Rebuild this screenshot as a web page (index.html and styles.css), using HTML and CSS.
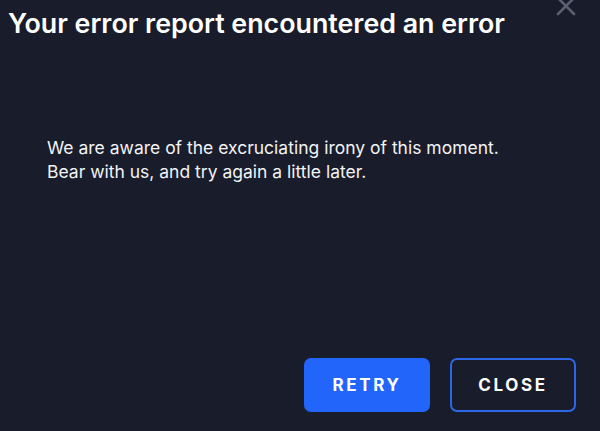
FILE: index.html
```html
<!DOCTYPE html>
<html lang="en">
<head>
    <meta charset="UTF-8">
    <title>Error report</title>
    <link rel="stylesheet" href="styles.css">
</head>
<body>
    <div class="dialog">
        <header class="dialog-header">
            <h1>Your error report encountered an error</h1>
            <button class="close-x" aria-label="Close">
                <svg width="20" height="20" viewBox="0 0 20 20">
                    <path d="M2 2 L18 18 M18 2 L2 18" stroke="#5b5f70" stroke-width="2.6" stroke-linecap="round"/>
                </svg>
            </button>
        </header>
        <div class="dialog-body">
            <p>We are aware of the excruciating irony of this moment.<br>
            Bear with us, and try again a little later.</p>
        </div>
        <footer class="dialog-actions">
            <button class="btn btn-primary">RETRY</button>
            <button class="btn btn-outline">CLOSE</button>
        </footer>
    </div>
</body>
</html>
```

FILE: styles.css
```css
* {
    margin: 0;
    padding: 0;
    box-sizing: border-box;
}

html, body {
    height: 100%;
}

body {
    background-color: #191c2a;
    color: #fff;
    font-family: Inter, "Open Sans", sans-serif;
    overflow: hidden;
}

.dialog {
    height: 100%;
    display: flex;
    flex-direction: column;
    padding: 0 24px 19px 8px;
}

.dialog-header {
    display: flex;
    justify-content: space-between;
    align-items: flex-start;
}

.dialog-header h1 {
    font-size: 26.8px;
    font-weight: 600;
    line-height: 32px;
    margin-top: 7px;
    letter-spacing: 0;
    white-space: nowrap;
}

.close-x {
    background: none;
    border: none;
    margin-top: -4px;
    cursor: pointer;
}

.dialog-body {
    flex: 1;
    padding: 97px 0 0 39px;
}

.dialog-body p {
    font-size: 17.5px;
    line-height: 23.5px;
    color: #f2f3f6;
}

.dialog-actions {
    display: flex;
    justify-content: flex-end;
    gap: 20px;
}

.btn {
    width: 126px;
    height: 54px;
    border-radius: 7px;
    font-family: Inter, sans-serif;
    font-size: 17px;
    font-weight: 700;
    letter-spacing: 2.6px;
    color: #fff;
    cursor: pointer;
}

.btn-primary {
    background-color: #2165fb;
    border: none;
}

.btn-outline {
    background-color: transparent;
    border: 2px solid #2c68e6;
}
```
